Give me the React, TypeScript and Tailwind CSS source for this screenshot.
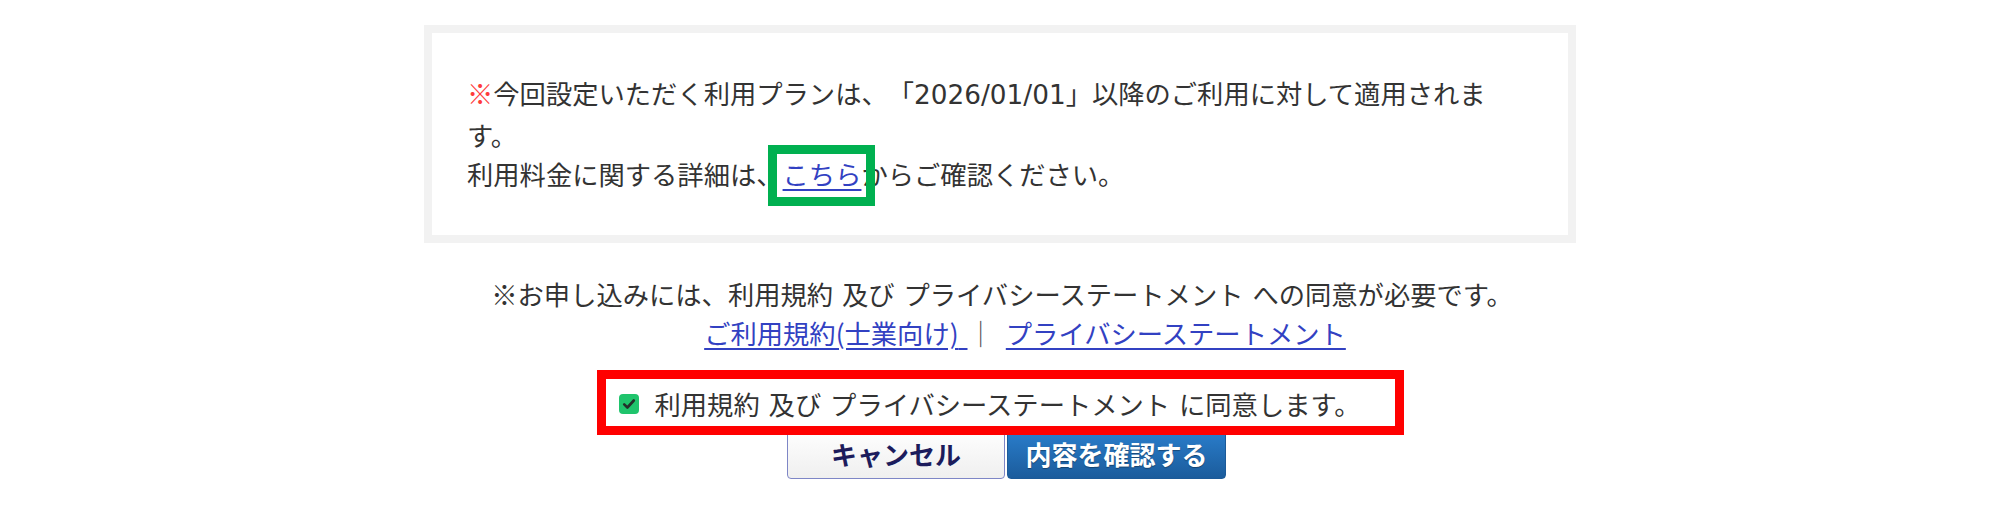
import React from 'react';

const CheckIcon = () => (
  <svg viewBox="0 0 20 20" className="h-[20px] w-[20px]">
    <rect x="0" y="0" width="20" height="20" rx="4" fill="#1fc46c" />
    <path
      d="M5.2 10.4l3.2 3.1 6.4-7"
      fill="none"
      stroke="#23302a"
      strokeWidth="2.6"
      strokeLinecap="round"
      strokeLinejoin="round"
    />
  </svg>
);

export default function App() {
  return (
    <div className="relative min-h-[524px] w-full bg-white pt-[25px] font-['Noto_Sans_CJK_JP',sans-serif] text-[26.3px] leading-[39px] text-[#333333] [text-spacing-trim:space-all] [word-spacing:3px]">
      {/* Plan notice */}
      <div className="mx-auto w-[1152px] border-8 border-[#f2f2f2] px-[35px] pt-[40px] pb-[42px]">
        <p className="whitespace-nowrap">
          <span className="text-[#ff3b3b]">※</span>
          今回設定いただく利用プランは、「
          <span className="font-['DejaVu_Sans',sans-serif]">2026/01/01</span>
          」以降のご利用に対して適用されま
          <br />
          す。
          <br />
          利用料金に関する詳細は、
          <a href="#" className="text-[#3241c2] underline underline-offset-[4px]">
            こちら
          </a>
          からご確認ください。
        </p>
      </div>

      {/* Terms */}
      <div className="mt-[31px] flex flex-col items-center">
        <p className="pl-[4px]">
          ※お申し込みには、利用規約 及び プライバシーステートメント への同意が必要です。
        </p>
        <p className="flex pl-[50px]">
          <a href="#" className="whitespace-pre text-[#3241c2] underline underline-offset-[4px]">
            ご利用規約(士業向け){' '}
          </a>
          <span className="text-[#555]">｜</span>
          <a href="#" className="ml-[12px] text-[#3241c2] underline underline-offset-[4px]">
            プライバシーステートメント
          </a>
        </p>
      </div>

      {/* Agreement */}
      <label className="mt-[32px] flex h-[39px] items-center justify-center pr-[21px]">
        <CheckIcon />
        <span className="ml-[16px]">利用規約 及び プライバシーステートメント に同意します。</span>
      </label>

      {/* Buttons */}
      <div className="mt-[4px] flex justify-center gap-[2px] pl-[13px]">
        <button
          type="button"
          className="h-[52px] w-[218px] rounded-[4px] border border-[#7e86c6] bg-gradient-to-b from-white to-[#efefef] text-[26px] font-bold text-[#1c1c5c]"
        >
          キャンセル
        </button>
        <button
          type="button"
          className="h-[52px] w-[219px] rounded-[4px] border border-[#1c5a98] bg-gradient-to-b from-[#2b80cf] to-[#1b5c9c] text-[26px] font-bold text-white [text-shadow:0_1px_1px_rgba(0,0,0,0.35)]"
        >
          内容を確認する
        </button>
      </div>

      {/* Annotation boxes */}
      <div className="absolute left-[768px] top-[145px] h-[61px] w-[107px] border-[9px] border-[#00b050]" />
      <div className="absolute left-[597px] top-[370px] h-[65px] w-[807px] border-[9px] border-[#ff0000]" />
    </div>
  );
}
